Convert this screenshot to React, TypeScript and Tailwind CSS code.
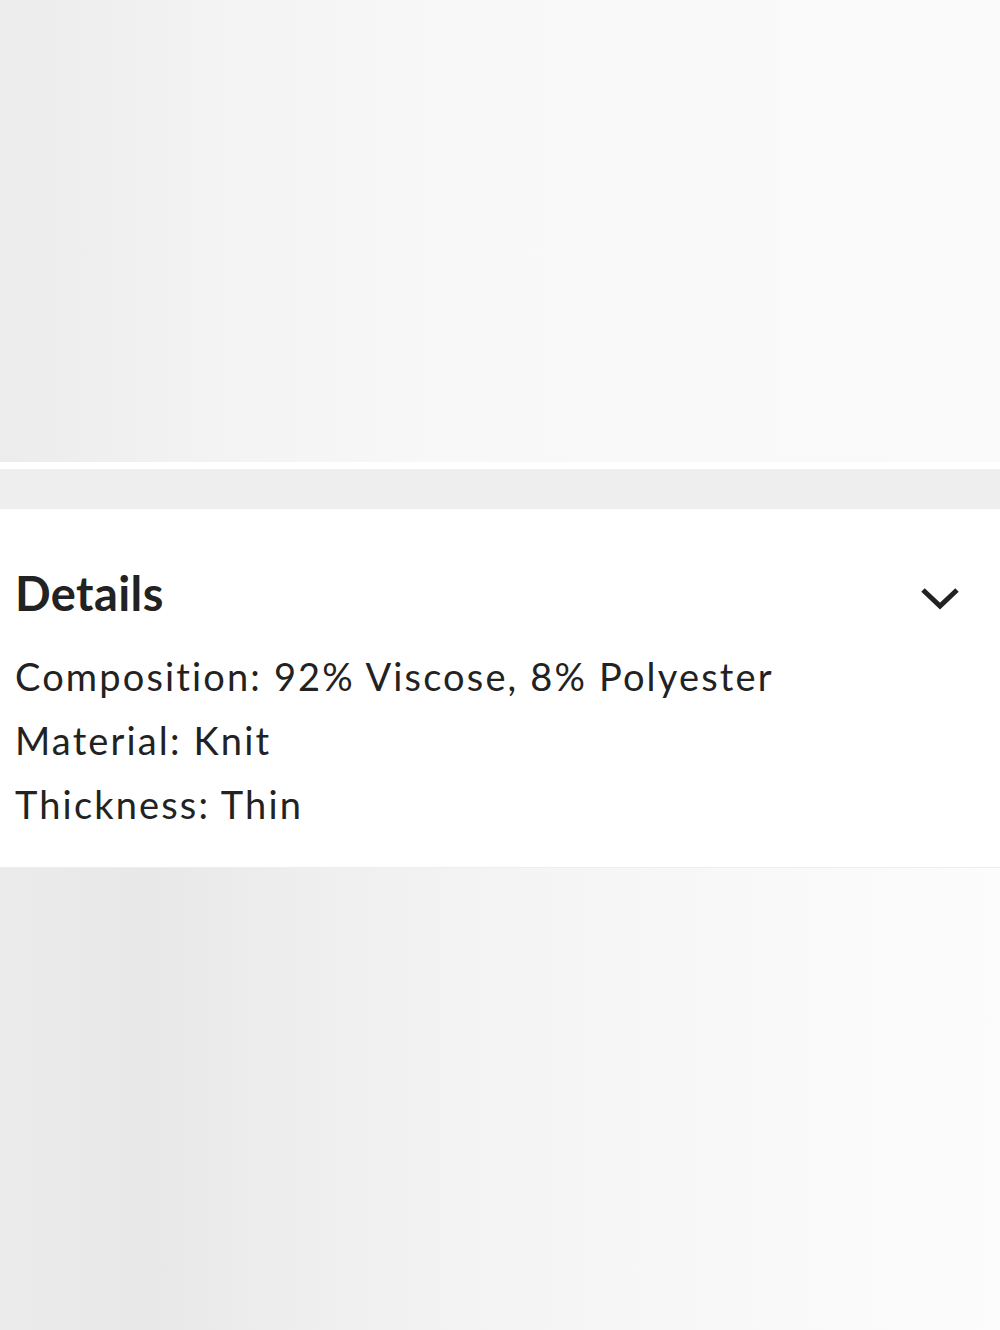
import React from "react";

export default function App() {
  return (
    <div className="w-[1000px] h-[1330px] bg-white flex flex-col overflow-hidden" style={{ fontFamily: "Lato, 'Open Sans', sans-serif", fontVariantLigatures: "none" }}>
      <div className="h-[462px] bg-[linear-gradient(90deg,#ececec_0%,#f4f4f4_25%,#f8f8f8_45%,#fafafa_100%)]" />
      <div className="h-[7px] bg-white" />
      <div className="h-[40px] bg-[#eeeeee]" />
      <div className="h-[359px] bg-white border-b border-[#eeeeee] px-[15px] pt-[55px] flex flex-col">
        <div className="flex items-center justify-between h-[58px]">
          <h2 className="text-[47px] font-bold text-[#222222] leading-none tracking-[0.4px] [font-variant-ligatures:none]">Details</h2>
          <svg width="40" height="26" viewBox="0 0 40 26" className="mr-[25px] mt-[10px]">
            <path d="M3 5 L20 21 L37 5" fill="none" stroke="#222222" strokeWidth="5" />
          </svg>
        </div>
        <div className="flex flex-col text-[38px] tracking-[2.15px] text-[#222222] leading-[64px] mt-[22px] [font-variant-ligatures:none]">
          <div>Composition: 92% Viscose, 8% Polyester</div>
          <div>Material: Knit</div>
          <div>Thickness: Thin</div>
        </div>
      </div>
      <div className="flex-1 bg-[linear-gradient(90deg,#ebebeb_0%,#e8e8e8_15%,#f0f0f0_35%,#f6f6f6_60%,#fcfcfc_100%)]" />
    </div>
  );
}
